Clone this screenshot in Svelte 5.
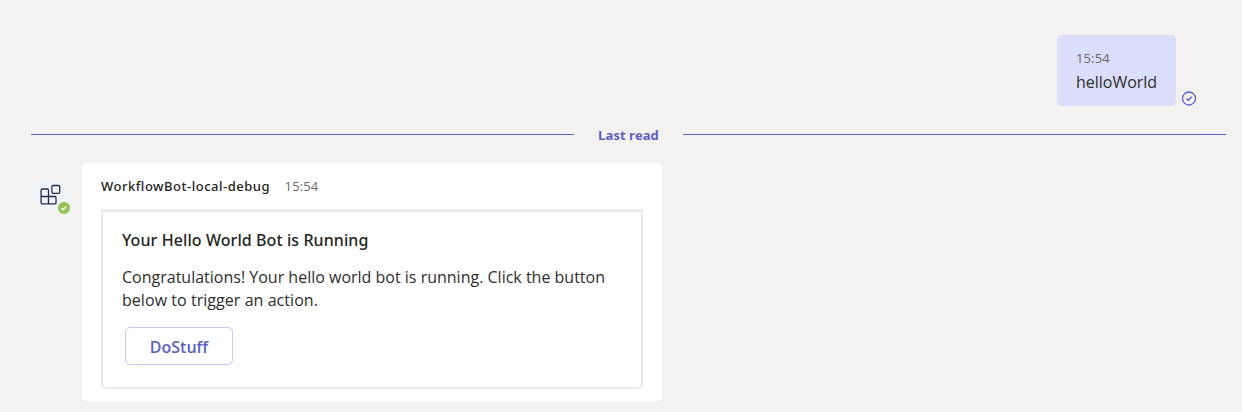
<script>
  const sent = { time: '15:54', text: 'helloWorld' };
  const bot = { name: 'WorkflowBot-local-debug', time: '15:54' };
  const card = {
    title: 'Your Hello World Bot is Running',
    lines: [
      'Congratulations! Your hello world bot is running. Click the button',
      'below to trigger an action.'
    ],
    action: 'DoStuff'
  };
</script>

<main class="chat">
  <section class="outgoing">
    <div class="bubble">
      <time class="time">{sent.time}</time>
      <p class="text">{sent.text}</p>
    </div>
    <svg class="status" width="16" height="16" viewBox="0 0 16 16" fill="none" stroke="#5b5fc7">
      <circle cx="8" cy="8.5" r="6.5" stroke-width="1.3" />
      <path d="M5.4 8.600 7.300 10.300l3.300-3.500" stroke-width="1.4" />
    </svg>
  </section>

  <div class="divider"><i></i><span>Last read</span><i></i></div>

  <section class="incoming">
    <div class="avatar">
      <svg width="38" height="34" viewBox="0 0 38 34">
        <path d="M11.5 1h15a3 3 0 0 1 2.6 1.5l7.4 13a3 3 0 0 1 0 3l-7.4 13A3 3 0 0 1 26.500 33h-15a3 3 0 0 1-2.600-1.500l-7.400-13a3 3 0 0 1 0-3l7.400-13A3 3 0 0 1 11.500 1Z" fill="#eff2f6" />
        <g fill="none" stroke="#252c4a" stroke-width="1.3" transform="translate(1 .5)">
          <path d="M10.300 11.500h5a1.200 1.200 0 0 1 1.200 1.200v6.300h6.300a1.200 1.200 0 0 1 1.200 1.200v5a1.200 1.200 0 0 1-1.200 1.200H10.300a1.200 1.200 0 0 1-1.200-1.200V12.700a1.200 1.200 0 0 1 1.200-1.200ZM9.100 19h7.400v7.400" />
          <rect x="19.900" y="8" width="7.800" height="7.800" rx="1.200" />
        </g>
      </svg>
      <svg class="presence" width="12" height="12" viewBox="0 0 12 12">
        <circle cx="6" cy="6" r="6" fill="#92c353" />
        <path d="m3.600 6.100 1.600 1.600 3.100-3.200" fill="none" stroke="#fff" stroke-width="1.500" />
      </svg>
    </div>
    <article class="message">
      <header><strong>{bot.name}</strong><time class="time">{bot.time}</time></header>
      <div class="card">
        <h2>{card.title}</h2>
        <p>{#each card.lines as line, i}<span class:second={i === 1}>{line}</span>{/each}</p>
        <button>{card.action}</button>
      </div>
    </article>
  </section>
</main>

<style>
  :global(body) { background: #f3f2f1; }
  .chat {
    box-sizing: border-box;
    height: 412px;
    padding: 35px 16px 0 31px;
    overflow: hidden;
    font-family: "Segoe UI", "Open Sans", "Noto Sans", sans-serif;
    color: #2e2d2c;
  }
  p, h2 { margin: 0; }
  .outgoing { display: flex; justify-content: flex-end; align-items: flex-end; gap: 5px; padding-right: 29px; }
  .bubble {
    box-sizing: border-box;
    width: 119px;
    height: 71px;
    padding: 14px 0 0 19px;
    border-radius: 5px;
    background: #dbdefa;
  }
  .time { display: block; font-size: 13px; line-height: 18px; color: #6c6967; letter-spacing: 0.12px; }
  .text { font-size: 16px; line-height: 24px; margin-top: 3px; letter-spacing: -0.02px; white-space: nowrap; }
  .status { display: block; }
  .divider { display: flex; align-items: center; height: 18px; margin-top: 20px; }
  .divider i { width: 543px; height: 1px; background: #5b5fc7; margin-bottom: 1px; }
  .divider span { flex: 1; text-align: center; font-size: 13px; line-height: 18px; font-weight: 700; color: #5b5fc7; letter-spacing: 0.05px; white-space: nowrap; }
  .incoming { display: flex; margin-top: 19px; }
  .avatar { position: relative; width: 51px; padding-top: 14px; }
  .avatar svg { display: block; }
  .avatar .presence { position: absolute; left: 27px; top: 39px; }
  .message { box-sizing: border-box; width: 580px; height: 238px; padding: 14px 19px 0; border-radius: 5px; background: #fff; }
  header { display: flex; height: 32px; gap: 14.500px; }
  header strong { font-family: "Segoe UI", "Noto Sans", sans-serif; font-size: 13px; line-height: 18px; font-weight: 500; color: #252423; letter-spacing: 0.51px; white-space: nowrap; }
  .card {
    box-sizing: border-box;
    height: 180px;
    padding: 17px 19px 0;
    border: 2px solid #ebebeb;
    border-top-width: 3px;
    border-radius: 0 0 5px 5px;
  }
  h2 { font-family: "Segoe UI", "Noto Sans", sans-serif; font-size: 16px; line-height: 23px; font-weight: 500; color: #252423; white-space: nowrap; letter-spacing: 0.08px; }
  .card p { margin-top: 14px; font-size: 16px; line-height: 23px; letter-spacing: 0; }
  .card span { display: block; white-space: nowrap; }
  .card .second { letter-spacing: 0.05px; }
  button {
    display: block;
    box-sizing: border-box;
    width: 108px;
    height: 38px;
    margin: 15px 0 0 3px;
    padding: 2px 0 0;
    border: 1px solid #c3c8fa;
    border-radius: 5px;
    background: #fff;
    color: #5b5fc7;
    font: 600 16px/24px "Segoe UI", "Open Sans", "Noto Sans", sans-serif;
  }
</style>
